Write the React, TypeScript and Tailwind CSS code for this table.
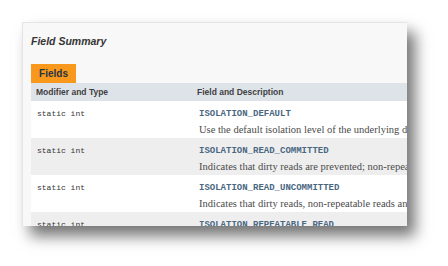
const FIELDS = [
  {
    type: "static int",
    name: "ISOLATION_DEFAULT",
    desc: "Use the default isolation level of the underlying datastore.",
  },
  {
    type: "static int",
    name: "ISOLATION_READ_COMMITTED",
    desc: "Indicates that dirty reads are prevented; non-repeatable reads and phantom reads can occur.",
  },
  {
    type: "static int",
    name: "ISOLATION_READ_UNCOMMITTED",
    desc: "Indicates that dirty reads, non-repeatable reads and phantom reads can occur.",
  },
  {
    type: "static int",
    name: "ISOLATION_REPEATABLE_READ",
    desc: "Indicates that dirty reads and non-repeatable reads are prevented; phantom reads can occur.",
  },
];

const sans = "font-['Liberation_Sans',Arial,sans-serif]";
const mono = "font-['Liberation_Mono','Courier_New',monospace]";
const serif = "font-['Liberation_Serif','Times_New_Roman',serif]";

export default function App() {
  return (
    <div className="w-[448px] h-[266px] bg-white pt-[22px] pl-[22px]">
      <div className="w-[385px] h-[204px] overflow-hidden bg-[#f8f8f8] border-l border-t border-[#e4e4e4] shadow-[8px_10px_14px_rgba(0,0,0,0.55)] pl-[8px]">
        {/* Title */}
        <div
          className={`${sans} pt-[11px] h-[41px] text-[10.5px] leading-[14px] font-bold italic text-[#353535]`}
        >
          Field Summary
        </div>

        {/* Tab */}
        <div className="flex">
          <span
            className={`${sans} h-[19px] w-[45px] flex items-center justify-center bg-[#f8981d] text-[10px] font-bold text-[#253441]`}
          >
            Fields
          </span>
        </div>

        {/* Table */}
        <div className="w-[560px]">
          <div
            className={`${sans} h-[18px] flex items-center bg-[#dee3e9] text-[8.5px] font-bold text-[#3f3f3f]`}
          >
            <span className="w-[166px] pl-[5px]">Modifier and Type</span>
            <span>Field and Description</span>
          </div>

          {FIELDS.map((f, i) => (
            <div
              key={f.name}
              className={`h-[37px] flex pt-[7px] ${i % 2 === 0 ? "bg-white" : "bg-[#eeeeef]"}`}
            >
              <div className={`${mono} w-[168px] pl-[6px] text-[8px] leading-[12px] text-[#353535]`}>
                {f.type}
              </div>
              <div className="flex flex-col">
                <span className={`${mono} text-[9px] leading-[12px] font-bold text-[#4a6782]`}>
                  {f.name}
                </span>
                <span
                  className={`${serif} mt-[4px] text-[10.5px] leading-[12px] text-[#4a4a4a] whitespace-nowrap`}
                >
                  {f.desc}
                </span>
              </div>
            </div>
          ))}
        </div>
      </div>
    </div>
  );
}
